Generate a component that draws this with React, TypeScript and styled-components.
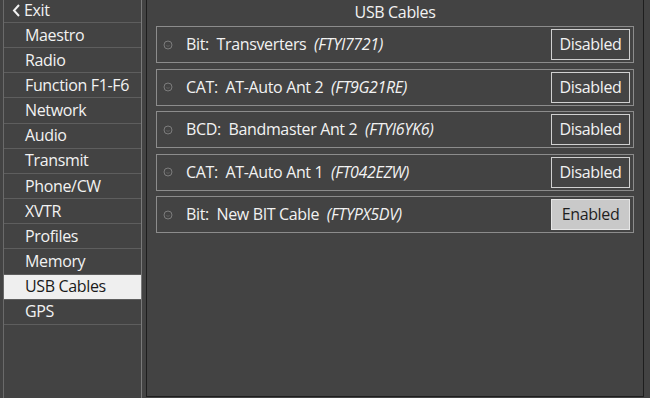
import React from "react";
import styled, { createGlobalStyle } from "styled-components";

const Global = createGlobalStyle`
  html, body { margin: 0; padding: 0; background: #434343; }
  body { font-family: "Open Sans", "Noto Sans", sans-serif; }
`;

const Screen = styled.div`
  display: flex;
  width: 650px;
  height: 398px;
  background: #434343;
  color: #f2f2f2;
  overflow: hidden;
`;

const Sidebar = styled.div`
  display: flex;
  width: 146px;
  padding: 0 4px 0 3px;
  box-sizing: border-box;
  flex-shrink: 0;
`;

const NavList = styled.nav`
  display: flex;
  flex-direction: column;
  flex: 1;
  border-left: 1px solid #6a6a6a;
  border-right: 1px solid #7a7a7a;
`;

const ExitRow = styled.div`
  display: flex;
  align-items: center;
  gap: 3px;
  height: 23px;
  box-sizing: border-box;
  padding-left: 8px;
  padding-bottom: 2px;
  border-bottom: 1px solid #5e5e5e;
  font-size: 16px;
  letter-spacing: -0.35px;
`;

const NavItem = styled.div<{ $active?: boolean }>`
  display: flex;
  align-items: center;
  height: 25.17px;
  box-sizing: border-box;
  padding-left: 21px;
  padding-bottom: 1px;
  border-bottom: 1px solid #5e5e5e;
  font-size: 16px;
  letter-spacing: -0.35px;
  background: ${(p) => (p.$active ? "#efefef" : "transparent")};
  color: ${(p) => (p.$active ? "#1a1a1a" : "#f2f2f2")};
`;

const Panel = styled.main`
  display: flex;
  flex-direction: column;
  width: 498px;
  height: 397px;
  box-sizing: border-box;
  border-left: 1px solid #1e1e1e;
  border-right: 1px solid #1e1e1e;
  border-bottom: 1px solid #1e1e1e;
  padding: 0 9px;
  flex-shrink: 0;
`;

const Title = styled.div`
  height: 26px;
  display: flex;
  align-items: center;
  justify-content: center;
  font-size: 16px;
  letter-spacing: -0.35px;
  padding-bottom: 3px;
  box-sizing: border-box;
`;

const Cards = styled.div`
  display: flex;
  flex-direction: column;
  gap: 5.5px;
`;

const Card = styled.div`
  display: flex;
  align-items: center;
  height: 37px;
  box-sizing: border-box;
  border: 1px solid #8c8c8c;
  padding: 2px 3px 2px 6px;
`;

const Dot = styled.svg`
  width: 10px;
  height: 10px;
  flex-shrink: 0;
  margin-right: 13px;
`;

const Label = styled.div`
  flex: 1;
  font-size: 16px;
  letter-spacing: -0.35px;
  white-space: pre;
  padding-bottom: 1px;
`;

const Serial = styled.span`
  font-style: italic;
`;

const Toggle = styled.button<{ $on?: boolean }>`
  width: 79px;
  height: 31px;
  box-sizing: border-box;
  border: 1px solid ${(p) => (p.$on ? "#e6e6e6" : "#d0d0d0")};
  background: ${(p) => (p.$on ? "#c9c9c9" : "#444444")};
  color: ${(p) => (p.$on ? "#1e1e1e" : "#f2f2f2")};
  font-family: "Open Sans", sans-serif;
  font-size: 16px;
  letter-spacing: -0.35px;
  padding: 0 0 1px;
  cursor: pointer;
`;

const menu = [
  "Maestro",
  "Radio",
  "Function F1-F6",
  "Network",
  "Audio",
  "Transmit",
  "Phone/CW",
  "XVTR",
  "Profiles",
  "Memory",
  "USB Cables",
  "GPS",
];

const cables = [
  { type: "Bit:", name: "Transverters", serial: "FTYI7721", on: false },
  { type: "CAT:", name: "AT-Auto Ant 2", serial: "FT9G21RE", on: false },
  { type: "BCD:", name: "Bandmaster Ant 2", serial: "FTYI6YK6", on: false },
  { type: "CAT:", name: "AT-Auto Ant 1", serial: "FT042EZW", on: false },
  { type: "Bit:", name: "New BIT Cable", serial: "FTYPX5DV", on: true },
];

const StatusDot = () => (
  <Dot viewBox="0 0 10 10">
    <circle cx="5" cy="5" r="4" fill="none" stroke="#7c7c7c" strokeWidth="1" />
    <path d="M3.3 5.6 Q5 7 6.7 5.6" fill="none" stroke="#666" strokeWidth="0.8" />
  </Dot>
);

export default function App() {
  return (
    <Screen>
      <Global />
      <Sidebar>
        <NavList>
          <ExitRow>
            <svg width="9" height="13" viewBox="0 0 9 13">
              <path d="M7 1 L2 6.5 L7 12" fill="none" stroke="#f2f2f2" strokeWidth="2" />
            </svg>
            <span>Exit</span>
          </ExitRow>
          {menu.map((m) => (
            <NavItem key={m} $active={m === "USB Cables"}>
              {m}
            </NavItem>
          ))}
        </NavList>
      </Sidebar>
      <Panel>
        <Title>USB Cables</Title>
        <Cards>
          {cables.map((c) => (
            <Card key={c.serial}>
              <StatusDot />
              <Label>
                {c.type}  {c.name}  <Serial>({c.serial})</Serial>
              </Label>
              <Toggle $on={c.on}>{c.on ? "Enabled" : "Disabled"}</Toggle>
            </Card>
          ))}
        </Cards>
      </Panel>
    </Screen>
  );
}
